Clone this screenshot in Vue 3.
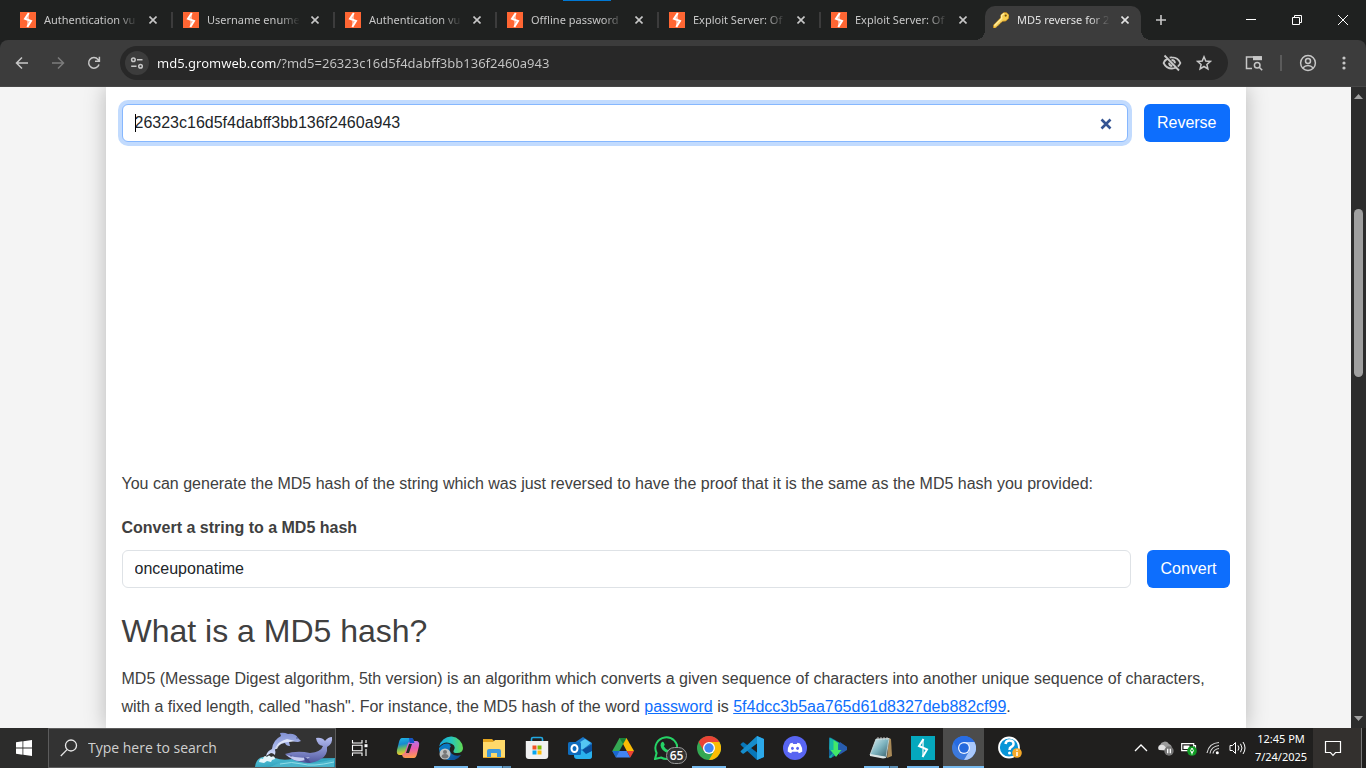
<script setup>
import { ref } from 'vue'

const tabs = [
  'Authentication vu',
  'Username enume',
  'Authentication vu',
  'Offline password',
  'Exploit Server: Of',
  'Exploit Server: Of'
]
const address = ref('md5.gromweb.com/?md5=26323c16d5f4dabff3bb136f2460a943')
const hash = ref('26323c16d5f4dabff3bb136f2460a943')
const phrase = ref('onceuponatime')
const query = ref('')
</script>

<template>
  <div class="desktop">
    <header class="strip">
      <span class="capture-mark"></span>
      <div v-for="(tab, i) in tabs" :key="i" class="tab" :class="{ first: i === 0, last: i === tabs.length - 1 }">
        <svg class="favicon" viewBox="0 0 16 16" aria-hidden="true">
          <rect width="16" height="16" fill="#ff6633" />
          <path d="M8.8 1 5 6.8l6 2.300L7.300 15" fill="none" stroke="#fff" stroke-width="2" />
          <path d="M8 2v5M8 9v5" stroke="#fff" stroke-width="1" />
        </svg>
        <span class="title">{{ tab }}</span>
        <button class="close" aria-label="Close tab">
          <svg viewBox="0 0 8 8"><path d="M.5.5l7 7M7.5.5l-7 7" /></svg>
        </button>
      </div>
      <div class="tab active">
        <svg class="favicon" viewBox="0 0 16 16" aria-hidden="true">
          <path d="M8.2 2.6 11 .5l2.7.3L16 3.2l-.4 3L12.800 9l-3.400.2-1.200 1.300H7v1.600H5.400l-.3 1.700H3.500L2.700 16H.5v-2.800L7.600 6z" fill="#f8cf50" stroke="#c98d1c" stroke-width=".8" />
          <path d="M2 14 9 7" stroke="#f6d261" stroke-width="3" />
          <path d="M1.500 13.700 8.800 6.300l-.4-2.800L11 1.600" fill="none" stroke="#fff0a8" stroke-width="1.200" />
          <circle cx="12.700" cy="3.600" r="1.100" fill="#76500e" />
        </svg>
        <span class="title">MD5 reverse for 2</span>
        <button class="close" aria-label="Close tab">
          <svg viewBox="0 0 8 8"><path d="M.5.5l7 7M7.5.5l-7 7" /></svg>
        </button>
      </div>
      <button class="new-tab" aria-label="New tab">
        <svg width="12" height="12" viewBox="0 0 12 12"><path d="M6 1v10M1 6h10" stroke="#c7c7c7" stroke-width="1.6" /></svg>
      </button>
      <div class="window-buttons">
        <button aria-label="Minimize"><svg viewBox="0 0 12 12"><path d="M1 5.5h10" /></svg></button>
        <button aria-label="Restore">
          <svg viewBox="0 0 12 12"><path d="M1.5 3.5h7v7h-7zM3.5 3.5v-2h7v7h-2" /></svg>
        </button>
        <button aria-label="Close"><svg viewBox="0 0 12 12"><path d="M1 1l10 10M11 1 1 11" /></svg></button>
      </div>
    </header>

    <nav class="toolbar">
      <button aria-label="Back">
        <svg width="14" height="14" viewBox="0 0 14 14" class="line"><path d="M13 7H2M7 1.5 1.5 7 7 12.5" /></svg>
      </button>
      <button class="dim" aria-label="Forward">
        <svg width="14" height="14" viewBox="0 0 14 14" class="line"><path d="M1 7h11M7 1.5 12.5 7 7 12.5" /></svg>
      </button>
      <button aria-label="Reload">
        <svg width="14" height="14" viewBox="0 0 14 14" class="line"><path d="M12 8.5A5.3 5.3 0 1 1 11 3.4L12.4 5M12.4.8V5.2H8" /></svg>
      </button>
      <div class="omnibox">
        <button class="site" aria-label="View site information">
          <svg width="14" height="14" viewBox="0 0 14 14" class="line"><circle cx="3.4" cy="3.8" r="1.8" /><path d="M7 3.8h5.5M1.2 10.2h5.3" /><circle cx="10.5" cy="10.2" r="1.8" /></svg>
        </button>
        <input v-model="address" class="address" type="text" aria-label="Address" spellcheck="false" />
        <button aria-label="Tracking protection">
          <svg width="20" height="18" viewBox="0 0 20 18" class="line strong"><path d="M6 4.3Q3 5.6 1.6 9q2.6 5.5 8.4 5.5 2 0 3.6-.7M7.6 3.6Q9 3.3 10 3.4q6 .1 8.4 5.6-.9 2.1-2.6 3.6M7 8.6q.1 3.3 3.3 3.4M9.5 6q3.3 0 3.5 3.3M2.5 1.5l14.5 15" /></svg>
        </button>
        <button aria-label="Bookmark">
          <svg width="16" height="16" viewBox="0 0 16 16" class="line"><path d="M8 1.8 9.8 6l4.5.4-3.4 3 1 4.5L8 11.5l-3.9 2.4 1-4.5-3.400-3L6.200 6z" /></svg>
        </button>
      </div>
      <button aria-label="Search with Lens">
        <svg width="18" height="16" viewBox="0 0 18 16" class="line"><path d="M7 13.5H1.5V2H16v3" /><path d="M8 1.200h9v4H8z" fill="currentColor" stroke="none" /><circle cx="12.200" cy="10.200" r="2.800" /><path d="m14.200 12.200 3 3" /></svg>
      </button>
      <span class="rule"></span>
      <button aria-label="Profile">
        <svg width="18" height="18" viewBox="0 0 18 18" class="line"><circle cx="9" cy="9" r="7.400" /><circle cx="9" cy="7" r="2.500" /><path d="M3.800 14q2.200-2.400 5.200-2.400t5.200 2.400" /></svg>
      </button>
      <button aria-label="Menu">
        <svg width="4" height="16" viewBox="0 0 4 16" fill="currentColor"><circle cx="2" cy="3" r="1.600" /><circle cx="2" cy="8" r="1.600" /><circle cx="2" cy="13" r="1.600" /></svg>
      </button>
    </nav>

    <div class="viewport">
      <div class="page">
        <main class="sheet">
          <form class="row" @submit.prevent>
            <div class="field">
              <input v-model="hash" class="control focused" type="text" aria-label="MD5 hash" spellcheck="false" />
              <span class="caret"></span>
              <button type="button" class="clear" aria-label="Clear" @click="hash = ''">
                <svg width="12" height="12" viewBox="0 0 12 12"><path d="M1.500 1.500l9 9M10.500 1.500l-9 9" stroke="#345493" stroke-width="2.600" /></svg>
              </button>
            </div>
            <button class="primary">Reverse</button>
          </form>
          <div class="slot"></div>
          <p>You can generate the MD5 hash of the string which was just reversed to have the proof that it is the same as the MD5 hash you provided:</p>
          <label for="phrase">Convert a string to a MD5 hash</label>
          <form class="row" @submit.prevent>
            <div class="field">
              <input id="phrase" v-model="phrase" class="control" type="text" spellcheck="false" />
            </div>
            <button class="primary">Convert</button>
          </form>
          <h2>What is a MD5 hash?</h2>
          <p>MD5 (Message Digest algorithm, 5th version) is an algorithm which converts a given sequence of characters into another unique sequence of characters, with a fixed length, called "hash". For instance, the MD5 hash of the word <a href="#">password</a> is <a href="#">5f4dcc3b5aa765d61d8327deb882cf99</a>.</p>
        </main>
      </div>
      <div class="scrollbar">
        <svg width="9" height="5" viewBox="0 0 9 5"><path d="M0 5 4.5 0 9 5z" fill="#a0a0a0" /></svg>
        <div class="track"><div class="thumb"></div></div>
        <svg width="9" height="5" viewBox="0 0 9 5"><path d="M0 0 4.5 5 9 0z" fill="#a0a0a0" /></svg>
      </div>
    </div>

    <footer class="taskbar">
      <button class="start" aria-label="Start">
        <svg width="16" height="16" viewBox="0 0 16 16" fill="#fff"><path d="M0 2.2 6.5 1.3v6.2H0zM7.3 1.2 16 0v7.5H7.3zM0 8.4h6.5v6.3L0 13.8zM7.3 8.4H16V16l-8.7-1.2z" /></svg>
      </button>
      <div class="search">
        <svg width="18" height="18" viewBox="0 0 18 18" fill="none" stroke="#e8e8e8" stroke-width="1.3"><circle cx="11" cy="6.5" r="5.5" /><path d="M7 10.6.8 17" /></svg>
        <input v-model="query" type="text" placeholder="Type here to search" aria-label="Type here to search" />
        <svg width="81" height="38" viewBox="0 0 81 38" aria-hidden="true">
          <defs>
            <linearGradient id="dolphin" x2="0" y2="1"><stop stop-color="#8190d2" /><stop offset=".6" stop-color="#a9b7e9" /><stop offset="1" stop-color="#dce4fc" /></linearGradient>
            <linearGradient id="whale" x2="0" y2="1"><stop stop-color="#b4bdf0" /><stop offset=".7" stop-color="#7078bb" /><stop offset="1" stop-color="#4e559a" /></linearGradient>
            <linearGradient id="sea" x2="1" y2="1"><stop stop-color="#5cc7db" /><stop offset="1" stop-color="#168cad" /></linearGradient>
          </defs>
          <path d="M1 38q1-9 8-10 6-1 12 1 8 3 17 1l43-1v9z" fill="url(#sea)" />
          <path d="M12 27q1-5 6-7 1-9 9-13l-1-3q4-1 8 1 7-1 10 4l3 3-3 1q-3 0-6-1l-3 1 1 4q-4 0-5-3-8 1-10 7 1 2 0 5-2-2-4-2z" fill="url(#dolphin)" />
          <path d="M21 20q3-8 12-10l8 2q-3 1-7 1-8 0-11 7z" fill="#eef2ff" opacity=".8" />
          <path d="M31 25q12-4 25-1 11-1 13-7-6-1-7-8 6-1 9 3 3-4 7-4 1 7-5 10 1 8-6 12-7 5-18 4-11-2-18-9z" fill="url(#whale)" />
          <path d="M32 26q14 4 24 2-8 6-16 3z" fill="#c8cdf2" /><path d="M50 28q5 1 7 7-7-1-7-7z" fill="#474c90" />
          <path d="M5 33q1-5 4-3 1-5 4-2 2-3 4 0 4-2 4 2l-3 1-1 2-4-1-3 2z" fill="#e5f6fb" />
          <path d="M27 33q10-3 20 0t33-3v8H16z" fill="#49b4cb" /><path d="M26 35q12-3 22 0t32-2" fill="none" stroke="#91dce7" />
          <circle cx="43" cy="9" r=".7" fill="#333f7d" /><circle cx="37" cy="27" r=".6" fill="#222b61" />
        </svg>
      </div>
      <button class="view" aria-label="Task View">
        <svg width="18" height="18" viewBox="0 0 18 18" fill="none" stroke="#fff" stroke-width="1.1"><path d="M1.5 1v3h9.500V1M1.500 17v-3H11v3M1.500 6.200H11v5.600H1.500zM15 1v3M15 10v7" /><path d="M13.500 5.200h3v3h-3z" fill="#fff" stroke="none" /></svg>
      </button>
      <div class="apps">
        <button aria-label="Copilot">
          <svg viewBox="0 0 24 24">
            <defs>
              <linearGradient id="copA" x2=".2" y2="1"><stop stop-color="#22b8e8" /><stop offset=".4" stop-color="#168ad0" /><stop offset=".65" stop-color="#6abc63" /><stop offset="1" stop-color="#f8c928" /></linearGradient>
              <linearGradient id="copB" x2=".1" y2="1"><stop stop-color="#ab77f1" /><stop offset=".5" stop-color="#e85ab1" /><stop offset="1" stop-color="#ff9951" /></linearGradient>
            </defs>
            <path d="M6 2h9q2 0 2.600 2l.8 3H15q-2 0-2.800 2l-2 7q-1 3-4 3H4q-4 0-3-5l2-8q1-4 3-4z" fill="url(#copA)" />
            <path d="M18 22H9q-2 0-2.600-2l-.5-2q2.500 0 3.500-3l2-6q1-4 4-4H20q4 0 3 5l-2 8q-1 4-3 4z" fill="url(#copB)" />
            <path d="M13 2h2q2 0 2.600 2l.8 3H15q-.8 0-1.300.5z" fill="#1751c7" /><path d="m10 17 3-9h3l-3 9z" fill="#252525" />
          </svg>
        </button>
        <button class="open" aria-label="Microsoft Edge">
          <svg viewBox="0 0 24 24">
            <defs>
              <linearGradient id="edgeG" x2="1"><stop stop-color="#16a6df" /><stop offset=".5" stop-color="#25c5be" /><stop offset="1" stop-color="#62db50" /></linearGradient>
              <linearGradient id="edgeB" x2="1" y2="1"><stop stop-color="#1491d4" /><stop offset="1" stop-color="#0b448f" /></linearGradient>
            </defs>
            <path d="M0 12a12 12 0 0 0 22 7q-5 2-9-1-4-4-1-8-6-5-12 2z" fill="url(#edgeB)" />
            <path d="M.2 10.500A12 12 0 0 1 24 12q0 5-6 5-5 0-3-3 2-4-2-6Q6 4 .2 10.500z" fill="url(#edgeG)" />
            <path d="M1 12q3-6 11-4-6 2-5 9 1 4 4 7Q1 23 1 12z" fill="#0879c4" />
            <circle cx="6" cy="18" r="5.500" fill="#bfc3c3" /><circle cx="6" cy="16" r="2" fill="#777" /><path d="M2.500 21q0-3 3.500-3t3.500 3q-3.500 3-7 0z" fill="#777" />
          </svg>
        </button>
        <button class="open stacked" aria-label="File Explorer">
          <svg viewBox="0 0 24 24"><path d="M1 3h9l2 2h11v17H1z" fill="#e5a51f" /><path d="M1 6h10l2-2h10v17H1z" fill="#ffd96a" /><path d="M5 21v-6q0-2 2-2h10q2 0 2 2v6h-4v-4H9v4z" fill="#3f99dc" /></svg>
        </button>
        <button aria-label="Microsoft Store">
          <svg viewBox="0 0 24 24"><path d="M6.500 6V3q0-1.500 1.500-1.500h8q1.500 0 1.500 1.500v3" fill="none" stroke="#21a9e2" stroke-width="1.600" /><path d="M.8 5h22.400v15q0 3-3 3H3.800q-3 0-3-3z" fill="#f1f1f1" /><path d="M7.500 9.500h4v4h-4z" fill="#f35325" /><path d="M12.500 9.500h4v4h-4z" fill="#81bc06" /><path d="M7.500 14.500h4v4h-4z" fill="#05a6f0" /><path d="M12.500 14.500h4v4h-4z" fill="#ffba08" /></svg>
        </button>
        <button aria-label="Outlook">
          <svg viewBox="0 0 24 24"><path d="M6 7 15 1l9 6v13q0 3-3 3H9q-3 0-3-3z" fill="#1976c9" /><path d="m9 8 8-5 6 4-9 7z" fill="#54c6f2" /><path d="m24 8-18 11q0 4 4 4h11q3 0 3-3z" fill="#29b1ed" /><path d="m14 14 10-6v7l-6 3z" fill="#0a4f9c" /><rect y="6" width="13" height="13" rx="1.500" fill="#0f6cbd" /><ellipse cx="6.500" cy="12.500" rx="3" ry="3.500" fill="none" stroke="#fff" stroke-width="2" /></svg>
        </button>
        <button aria-label="Google Drive">
          <svg viewBox="0 0 24 24"><path d="M8.500 2h7L5 21l-3.700-6z" fill="#34a853" /><path d="M8.500 2h7l-3.400 6z" fill="#188038" /><path d="M15.500 2 23 15h-7.200l-3.700-7z" fill="#fbbc04" /><path d="M1.300 15h7l-3.500 6.500z" fill="#1967d2" /><path d="M8.300 15h7.500l3.500 6.500H4.800z" fill="#4285f4" /><path d="M15.800 15H23l-3.700 6.500z" fill="#ea4335" /></svg>
        </button>
        <button aria-label="WhatsApp">
          <svg viewBox="0 0 24 24"><path d="m1 23 1.600-6A11 10.800 0 1 1 7 21.500z" fill="none" stroke="#25d366" stroke-width="2" /><path d="M8 6q1-1 2 1l.8 1.800-1 1.500q1.500 2.700 4.300 3.800l1.300-1.500 2.600 1.300q-.2 3-3.500 3-7-1.400-8-7.500Q6.500 7 8 6z" fill="#25d366" /></svg>
          <span class="badge">65</span>
        </button>
        <button class="open" aria-label="Chrome">
          <svg viewBox="0 0 24 24"><circle cx="12" cy="12" r="12" fill="#34a853" /><path d="M1.600 6A12 12 0 0 1 22.400 6H12l-5.200 9z" fill="#ea4335" /><path d="M22.400 6A12 12 0 0 1 12 24l5.200-9L12 6z" fill="#fbbc04" /><circle cx="12" cy="12" r="6" fill="#fff" /><circle cx="12" cy="12" r="4.700" fill="#4285f4" /></svg>
        </button>
        <button aria-label="Visual Studio Code">
          <svg viewBox="0 0 24 24"><path d="M17 0 24 3v18l-7 3L1 9.300q-1-.8 0-1.600L2.500 6.500q.7-.5 1.400 0L17 16.600z" fill="#0877b9" /><path d="M17 0v7.400L3.900 17.500q-.7.500-1.400 0L1 16.300q-1-.8 0-1.600z" fill="#168dcc" /><path d="m17 0 7 3v18l-7 3z" fill="#2ca9ea" /></svg>
        </button>
        <button aria-label="Discord">
          <svg viewBox="0 0 24 24"><circle cx="12" cy="12" r="12" fill="#5865f2" /><path d="M7 7.500 9.500 6.800l.7 1.200h3.600l.7-1.200 2.500.7q2.500 4 2.300 8-1.500 1.300-3.500 1.700l-.8-1.500H9l-.8 1.500q-2-.4-3.500-1.700-.2-4 2.300-8z" fill="#fff" /><ellipse cx="9.400" cy="12.300" rx="1.400" ry="1.600" fill="#5865f2" /><ellipse cx="14.600" cy="12.300" rx="1.400" ry="1.600" fill="#5865f2" /></svg>
        </button>
        <button aria-label="Google Play Games">
          <svg viewBox="0 0 24 24"><path d="M3 2q0-1 2-.3l15 8.500q2 1.300 0 3L5 22q-2 1-2-1z" fill="#187aa2" /><path d="m4 2 9 5-8 15-2-1z" fill="#16b9a4" /><path d="m14 6 7 5v3l-8 5z" fill="#285caf" /><path d="m3 13 4 4-4 4z" fill="#17639b" /><path d="M7.500 4 12 7v7h3.500L10 21l-5.500-7h3z" fill="#42e968" /></svg>
        </button>
        <button class="open stacked" aria-label="Notepad">
          <svg viewBox="0 0 24 24"><defs><linearGradient id="note" x2="1" y2="1"><stop stop-color="#def1f3" /><stop offset=".5" stop-color="#7eb4bf" /><stop offset="1" stop-color="#345b67" /></linearGradient></defs><path d="m20 2 2 1 1 17-5 2z" fill="#a98a58" /><path d="m7 3 13-.5-3 19L1 19z" fill="url(#note)" stroke="#d6e4e4" stroke-width=".8" /><path d="m1 18 15 2.500 1 1.500-3 .5L1 20z" fill="#dce5e5" /><path d="M9 1v3m3-3v3m3-3v3m3-3v3" stroke="#dedede" stroke-width=".8" /></svg>
        </button>
        <button class="open burp" aria-label="Burp Suite">
          <svg viewBox="0 0 24 24"><path d="M0 0h24v24H0z" fill="#05a8bd" /><path d="M12.500 3 8 10l8 3.500L11.500 21" fill="none" stroke="#fff" stroke-width="2" /><path d="M12 4v7M12 13v7" stroke="#fff" stroke-width="1.200" /></svg>
        </button>
        <button class="current" aria-label="Chromium">
          <svg viewBox="0 0 24 24"><circle cx="12" cy="12" r="12" fill="#3c79dc" /><path d="M1.600 6A12 12 0 0 1 22.400 6H12l-5.200 9z" fill="#276ce3" /><path d="M22.400 6A12 12 0 0 1 12 24l5.200-9L12 6z" fill="#a9c8fb" /><circle cx="12" cy="12" r="6" fill="#f1f5ff" /><circle cx="12" cy="12" r="4.800" fill="#2469dd" /></svg>
        </button>
        <button class="help" aria-label="Get Help">
          <svg viewBox="0 0 24 24"><circle cx="11" cy="11.500" r="10" fill="#0795d8" stroke="#fff" stroke-width="1.800" /><path d="M7.500 8q.5-3.500 4-3.500 4 0 4 3.300 0 2.200-2.300 3.200-1.700.8-1.700 3" fill="none" stroke="#fff" stroke-width="2.500" /><circle cx="11.500" cy="17" r="1.500" fill="#fff" /><circle cx="19" cy="17" r="4.800" fill="#f6a928" /><path d="M19 16v4M19 13.500v1.300" stroke="#fff" stroke-width="1.500" /></svg>
        </button>
      </div>
      <div class="tray">
        <button aria-label="Show hidden icons"><svg width="14" height="16" viewBox="0 0 14 16"><path d="m1 11 6-6 6 6" fill="none" stroke="#fff" stroke-width="1.300" /></svg></button>
        <button aria-label="OneDrive"><svg width="17" height="16" viewBox="0 0 17 16"><path d="M2 10a3 3 0 0 1 1-5 5 5 0 0 1 9-1q3 1 3 5l-4 2z" fill="#9b9b9b" /><path d="M2.500 10a3 3 0 0 1 1-5q3-1 5 2l2 3z" fill="#e1e1e1" /><circle cx="12" cy="11" r="4.700" fill="#777" /><path d="M10.700 8.700v4.600M13.300 8.700v4.600" stroke="#fff" stroke-width="1.300" /></svg></button>
        <button aria-label="Battery"><svg width="16" height="16" viewBox="0 0 16 16"><path d="M.7 3.700h12v7h-12zM13 5.500h1.500v3H13" fill="none" stroke="#fff" stroke-width="1.200" /><path d="M2.500 5.500h6v3.500h-6z" fill="#fff" /><circle cx="11" cy="11" r="4.800" fill="#109c24" /><path d="M11 8q3 3 0 5-3-2 0-5zm0 3v3.500" fill="none" stroke="#fff" /></svg></button>
        <button aria-label="Wi-Fi"><svg width="14" height="16" viewBox="0 0 14 16"><g fill="none" stroke="#d8d8d8" stroke-width="1.200"><path d="M1 13Q3 3 13 2.500" /><path d="M4 13.500Q5 6.500 13 5.500" /><path d="M7 13.500Q7.500 9.500 13 8.500" /></g><circle cx="11.300" cy="12.700" r="1.500" fill="#fff" /></svg></button>
        <button aria-label="Volume"><svg width="17" height="16" viewBox="0 0 17 16"><path d="M1 5.500h2.500L6.500 2.500v11L3.500 10.500H1zM9 5.500q2 2.500 0 5M11.500 3.800q3 4.200 0 8.400M14 2q4 6 0 12" fill="none" stroke="#fff" /></svg></button>
      </div>
      <time class="clock"><span>12:45 PM</span><span>7/24/2025</span></time>
      <button class="notice" aria-label="Notifications">
        <svg width="18" height="18" viewBox="0 0 18 18"><path d="M1.500 2.500h15v11h-5L9 16.300l-2.500-2.800h-5z" fill="none" stroke="#fff" stroke-width="1.200" /></svg>
      </button>
    </footer>
  </div>
</template>

<style>
html, body, #app { height: 100%; }
body { margin: 0; overflow: hidden; }
</style>

<style scoped>
* { box-sizing: border-box; }
button { border: 0; padding: 0; background: transparent; color: inherit; font: inherit; display: flex; align-items: center; justify-content: center; flex: none; }
svg { display: block; flex: none; }
input { min-width: 0; outline: 0; }
.desktop { height: 100%; display: flex; flex-direction: column; font-family: "Open Sans", "Noto Sans", sans-serif; background: #1f2020; }
.line { fill: none; stroke: currentColor; stroke-width: 1.5; }
.strong { stroke-width: 1.8; }

.strip { position: relative; display: flex; align-items: center; height: 40px; flex: none; padding-left: 11px; background: #1f2120; color: #c7c7c7; font-family: "Noto Sans", sans-serif; font-size: 11px; }
.capture-mark { position: absolute; top: 0; left: 563px; width: 48px; height: 1px; background: #0078d4; }
.tab { position: relative; width: 162px; height: 16px; display: flex; align-items: center; padding: 0 13px 0 10px; border-right: 2px solid #3c3c3c; }
.tab.first { padding-left: 9px; }
.tab.last { border-color: transparent; }
.favicon { width: 16px; height: 16px; margin-right: 8px; }
.title { flex: 1; overflow: hidden; white-space: nowrap; line-height: 16px; margin-right: 10px; mask-image: linear-gradient(to right, #000 78%, transparent); }
.close { width: 10px; height: 16px; }
.close svg { width: 8px; height: 8px; stroke: currentColor; stroke-width: 1.6; }
.tab.active { align-self: flex-end; margin-left: 2px; width: 156px; height: 34px; padding: 0 11px 6px 8px; border: 0; border-radius: 10px 10px 0 0; background: #3c3c3c; color: #e3e3e3; }
.tab.active::before, .tab.active::after { content: ""; position: absolute; bottom: 0; width: 10px; height: 10px; }
.tab.active::before { left: -10px; background: radial-gradient(circle at 0 0, transparent 10px, #3c3c3c 10px); }
.tab.active::after { right: -10px; background: radial-gradient(circle at 100% 0, transparent 10px, #3c3c3c 10px); }
.new-tab { width: 28px; height: 28px; margin-left: 6px; }
.window-buttons { display: flex; margin-left: auto; }
.window-buttons button { width: 46px; height: 40px; }
.window-buttons svg { width: 12px; height: 12px; fill: none; stroke: #fff; stroke-width: 1; }

.toolbar { height: 47px; flex: none; display: flex; align-items: center; padding: 0 4px; background: #3c3c3c; border-bottom: 1px solid #474747; border-radius: 8px 8px 0 0; color: #c7c7c7; }
.toolbar > button { width: 36px; height: 34px; }
.toolbar > .dim { color: #7c7c7c; }
.omnibox { flex: 1; height: 34px; margin: 0 8px; padding: 0 8px 0 5px; display: flex; align-items: center; border-radius: 17px; background: #282828; }
.omnibox button { width: 32px; height: 32px; }
.omnibox .site { width: 24px; height: 24px; border-radius: 12px; background: #3c3c3c; margin-right: 8px; }
.address { flex: 1; border: 0; padding: 0; font: 13px/20px "Noto Sans", sans-serif; color: transparent; background: linear-gradient(to right, #fff 120px, #c7c7c7 120px); background-clip: text; }
.rule { width: 2px; height: 16px; margin: 0 8px; background: #5b5b5b; }

.viewport { flex: 1; min-height: 0; display: flex; background: #f4f4f4; }
.page { flex: 1; overflow: hidden; font-family: "Liberation Sans", Arial, sans-serif; }
.sheet { max-width: 1140px; min-height: 100%; margin: 0 auto; padding: 17px 16px 0; background: #fff; box-shadow: 0 0 20px rgba(0, 0, 0, .25); font-size: 16px; line-height: 28px; color: #404040; }
.row { display: flex; gap: 16px; }
.field { position: relative; flex: 1; }
.control { display: block; width: 100%; height: 38px; padding: 6px 12px; border: 1px solid #dee2e6; border-radius: 6px; background: #fff; color: #212529; font: 16px/24px "Liberation Sans", Arial, sans-serif; }
.control.focused { border-color: #86b7fe; box-shadow: 0 0 0 4px #c2dbfe; }
.caret { position: absolute; left: 13px; top: 10px; width: 1px; height: 18px; background: #000; }
.clear { position: absolute; right: 16px; top: 14px; width: 12px; height: 12px; }
.primary { height: 38px; padding: 0 13px; border-radius: 6px; background: #0d6efd; color: #fff; font-size: 16px; line-height: 24px; }
.slot { height: 328px; }
.sheet p { margin: 0; }
.sheet label { display: block; margin: 16px 0 8px; font-weight: 700; }
.sheet h2 { margin: 24px 0 15px; font-size: 32px; line-height: 38px; font-weight: 400; }
.sheet a { color: #0d6efd; text-decoration: underline; }
.scrollbar { width: 15px; display: flex; flex-direction: column; align-items: center; padding: 7px 0; background: #2c2c2c; }
.track { flex: 1; width: 9px; padding-top: 110px; }
.thumb { height: 168px; border-radius: 5px; background: #9f9f9f; }

.taskbar { height: 40px; flex: none; display: flex; background: #201f1e; color: #fff; }
.start { width: 48px; background: #2c2c2b; }
.search { width: 288px; display: flex; align-items: center; padding-left: 11px; background: #333; border: 1px solid #5c5c5c; }
.search input { flex: 1; border: 0; padding: 0 0 0 10px; background: transparent; color: #fff; font: 14px/20px "Open Sans", "Noto Sans", sans-serif; }
.search input::placeholder { color: #d0d0d0; opacity: 1; }
.view { width: 50px; padding-right: 2px; }
.apps { display: flex; }
.apps button { position: relative; width: 43px; }
.apps svg { width: 24px; height: 24px; }
.apps .open::after { content: ""; position: absolute; left: 5px; right: 4px; bottom: 0; height: 2px; background: #76b9ed; }
.apps .stacked::after { background: linear-gradient(to right, #76b9ed 25px, #38576e 25px, #38576e 26px, #5a8db3 26px); }
.apps .burp, .apps .current { width: 41px; }
.apps .current { background: #4c4c4b; box-shadow: inset 0 -2px #76b9ed; }
.apps .help { width: 52px; }
.badge { position: absolute; right: 0; bottom: 4px; width: 21px; height: 17px; border: 1px solid #999; border-radius: 9px; background: #333; font-size: 12px; line-height: 15px; font-weight: 600; text-align: center; }
.tray { display: flex; margin-left: auto; }
.tray button { width: 24px; }
.clock { width: 64px; display: flex; flex-direction: column; align-items: center; justify-content: center; font-family: "Noto Sans", sans-serif; font-size: 11px; line-height: 18px; }
.notice { width: 48px; margin-right: 5px; padding-right: 8px; background: #33302e; box-shadow: 1px 0 #777; }
</style>
